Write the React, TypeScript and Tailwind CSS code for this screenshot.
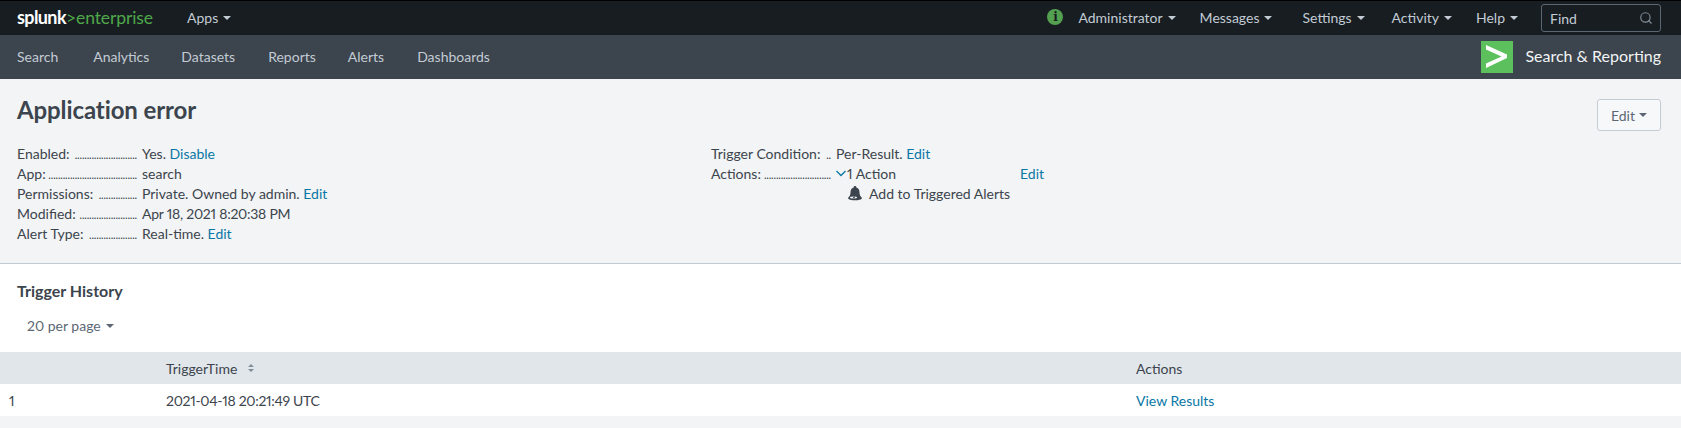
import React from 'react';
import { Search } from 'lucide-react';

const Caret = ({ className = 'border-t-[#c3cbd4]' }: { className?: string }) => (
  <span className={`inline-block w-0 h-0 border-x-[4px] border-x-transparent border-t-[4px] ${className}`} />
);

const TopMenu = ({ label, gap }: { label: string; gap: string }) => (
  <a className={`flex items-center gap-[5px] text-[14px] text-[#c3cbd4] ${gap}`}>
    <span>{label}</span>
    <Caret />
  </a>
);

const Row = ({ label, dots, children }: { label: string; dots: number; children: React.ReactNode }) => (
  <div className="flex h-[20px] items-center">
    <div className="flex items-baseline justify-between w-[120px] shrink-0">
      <span className="whitespace-nowrap">{label}</span>
      <span className="whitespace-nowrap text-[11px] tracking-[-0.2px]">{'.'.repeat(dots)}</span>
    </div>
    <div className="pl-[5px] flex items-center">{children}</div>
  </div>
);

const Link = ({ children }: { children: React.ReactNode }) => <a className="text-[#0877a6]">{children}</a>;

const BellIcon = () => (
  <svg viewBox="0 0 14 15" className="w-[14px] h-[15px] mr-[7px] ml-px">
    <path
      d="M7 0a1.3 1.3 0 0 1 1.3 1.5C10.6 2.1 11.5 4 11.5 6.5 11.5 9 12.5 10.5 14 12c0 1.6-4 2.3-7 2.3S0 13.6 0 12c1.5-1.5 2.5-3 2.5-5.5C2.5 4 3.4 2.1 5.7 1.500A1.300 1.300 0 0 1 7 0Z"
      fill="#3c444d"
    />
    <ellipse cx="5.500" cy="11.500" rx="3.500" ry="1.100" fill="#f2f4f5" />
    <circle cx="6" cy="11.500" r="0.900" fill="#3c444d" />
  </svg>
);

export default function App() {
  return (
    <div className="min-h-screen bg-[#f2f4f5] text-[14px] text-[#3c444d] proportional-nums font-['Lato','Liberation_Sans',sans-serif]">
      {/* Top bar */}
      <div className="h-[35px] bg-[#171d21] border-t border-black flex items-center pl-[17px] pr-[20px] pb-px">
        <div className="flex items-baseline w-[170px] leading-none">
          <span className="text-[18px] font-bold text-white tracking-[-0.6px]">splunk</span>
          <span className="text-[17.5px] text-[#4fa84a] tracking-[-0.1px]">&gt;enterprise</span>
        </div>
        <TopMenu label="Apps" gap="" />
        <div className="ml-auto flex items-center">
          <span className="w-[16px] h-[16px] mr-[15px] rounded-full bg-[#53a051] flex items-center justify-center text-[#171d21] text-[12px] font-bold font-['DejaVu_Serif',serif] leading-none mb-[2px]">
            i
          </span>
          <TopMenu label="Administrator" gap="mr-[24px]" />
          <TopMenu label="Messages" gap="mr-[30px]" />
          <TopMenu label="Settings" gap="mr-[27px]" />
          <TopMenu label="Activity" gap="mr-[24px]" />
          <TopMenu label="Help" gap="mr-[23px]" />
          <div className="w-[120px] h-[28px] mt-px rounded-[3px] border border-[#5c6773] flex items-center justify-between pl-[8px] pr-[7px] text-[#c3cbd4]">
            <span>Find</span>
            <Search className="w-[14px] h-[14px] text-[#818d99]" />
          </div>
        </div>
      </div>

      {/* App bar */}
      <div className="h-[44px] bg-[#3c444d] flex items-center pl-[17px] pr-[20px] text-[#c3cbd4]">
        <div className="flex gap-[33px] mb-[2px]">
          <a className="mr-[2px]">Search</a>
          <a className="-mr-px">Analytics</a>
          <a>Datasets</a>
          <a className="-mr-px">Reports</a>
          <a>Alerts</a>
          <a>Dashboards</a>
        </div>
        <div className="ml-auto flex items-center gap-[12px]">
          <div className="w-[32px] h-[32px] bg-[#5cc05c]">
            <svg viewBox="0 0 32 32" className="w-full h-full">
              <path d="M5 4 L26 13.500 V17 L5 27 V22.500 L20.500 15.500 L5 8.500 Z" fill="#fff" />
            </svg>
          </div>
          <span className="text-[16px] text-[#f2f4f5] mb-[2px]">Search &amp; Reporting</span>
        </div>
      </div>

      {/* Alert header */}
      <div className="h-[185px] border-b border-[#c3cbd4] pl-[17px] pr-[20px] pt-[15px]">
        <div className="flex items-start justify-between h-[49px]">
          <h1 className="mt-px text-[24px] font-bold tracking-[-0.1px] leading-[30px]">Application error</h1>
          <button className="mt-[5px] w-[64px] h-[32px] rounded-[3px] border border-[#c3cbd4] bg-[#f7f8fa] text-[#5c6773] flex items-center justify-center gap-[4px]">
            Edit <Caret className="border-t-[#5c6773]" />
          </button>
        </div>
        <div className="flex">
          <div className="w-[694px]">
            <Row label="Enabled:" dots={26}>
              Yes.&nbsp;<Link>Disable</Link>
            </Row>
            <Row label="App:" dots={37}>search</Row>
            <Row label="Permissions:" dots={16}>
              Private. Owned by admin.&nbsp;<Link>Edit</Link>
            </Row>
            <Row label="Modified:" dots={24}>
              <span className="tracking-[-0.25px]">Apr 18, 2021 8:20:38 PM</span>
            </Row>
            <Row label="Alert Type:" dots={20}>
              Real-time.&nbsp;<Link>Edit</Link>
            </Row>
          </div>
          <div>
            <Row label="Trigger Condition:" dots={2}>
              Per-Result.&nbsp;<Link>Edit</Link>
            </Row>
            <Row label="Actions:" dots={28}>
              <svg viewBox="0 0 10 7" className="w-[10px] h-[7px] mr-px" fill="none" stroke="#0877a6" strokeWidth="1.300">
                <path d="M0.500 1 L5 5.500 L9.500 1" />
              </svg>
              <span className="w-[173px]">1 Action</span>
              <Link>Edit</Link>
            </Row>
            <div className="flex h-[20px] items-center pl-[136px]">
              <BellIcon />
              Add to Triggered Alerts
            </div>
          </div>
        </div>
      </div>

      {/* Trigger history */}
      <div className="bg-white pt-[17px]">
        <h2 className="pl-[17px] text-[16px] font-bold leading-[20px]">Trigger History</h2>
        <div className="h-[51px] pl-[27px] pb-[2px] flex items-center gap-[5px] text-[#5c6773]">
          20 per page <Caret className="border-t-[#5c6773]" />
        </div>
        <table className="w-full table-fixed border-collapse">
          <colgroup>
            <col className="w-[157px]" />
            <col className="w-[970px]" />
            <col />
          </colgroup>
          <thead>
            <tr className="h-[32px] bg-[#e1e6eb] text-left">
              <th className="pl-[9px] font-normal"></th>
              <th className="pl-[9px] font-normal">
                <span className="inline-flex items-center gap-[11px]">
                  TriggerTime
                  <svg viewBox="0 0 6 8" className="w-[6px] h-[8px] fill-[#818d99]">
                    <path d="M3 0 L6 3 H0 Z M0 5 H6 L3 8 Z" />
                  </svg>
                </span>
              </th>
              <th className="pl-[9px] font-normal">Actions</th>
            </tr>
          </thead>
          <tbody>
            <tr className="h-[32px]">
              <td className="pl-[9px]">1</td>
              <td className="pl-[9px] tracking-[-0.3px]">2021-04-18 20:21:49 UTC</td>
              <td className="pl-[9px]">
                <Link>View Results</Link>
              </td>
            </tr>
          </tbody>
        </table>
      </div>
    </div>
  );
}
